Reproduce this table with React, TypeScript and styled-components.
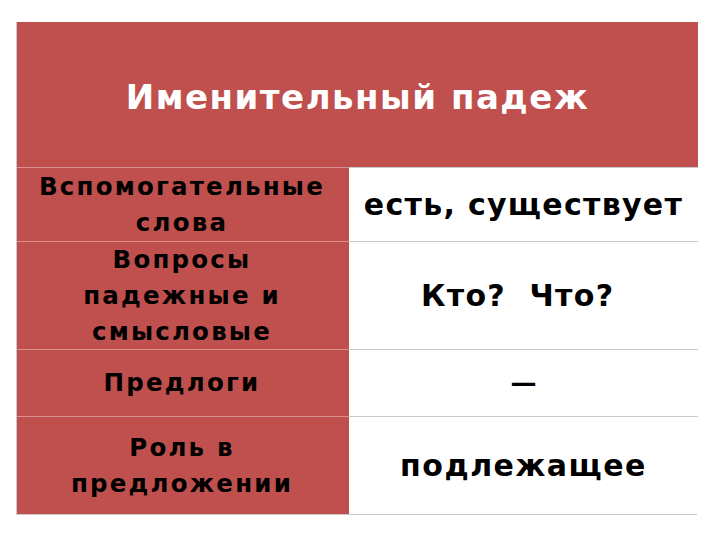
import React from "react";
import styled, { createGlobalStyle } from "styled-components";

const Global = createGlobalStyle`
  html, body { margin: 0; padding: 0; background: #ffffff; }
  body { font-family: "DejaVu Sans", "Liberation Sans", sans-serif; }
`;

const Page = styled.div`
  width: 720px;
  height: 540px;
  padding: 22px 23px 0 16px;
  box-sizing: border-box;
`;

const Table = styled.div`
  display: grid;
  grid-template-columns: 332px 349px;
  grid-template-rows: 145px 74px 108px 67px 98px;
  width: 681px;
  border-left: 1px solid #c9c9c9;
  border-right: 1px solid #c9c9c9;
  border-bottom: 1px solid #c9c9c9;
  box-sizing: border-box;
`;

const Header = styled.div`
  grid-column: 1 / 3;
  background: #c0504d;
  color: #ffffff;
  display: flex;
  align-items: center;
  justify-content: center;
  font-weight: bold;
  font-size: 34px;
  letter-spacing: 1.5px;
  padding-top: 4px;
  box-sizing: border-box;
`;

const Label = styled.div`
  background: #c0504d;
  color: #000000;
  border-top: 1px solid #d98f8d;
  display: flex;
  align-items: center;
  justify-content: center;
  text-align: center;
  font-weight: bold;
  font-size: 24.5px;
  line-height: 36px;
  letter-spacing: 2.2px;
  box-sizing: border-box;
  padding: 0 2px 0 0;
`;

const Value = styled.div<{ $size?: number; $spacing?: number }>`
  background: #ffffff;
  color: #000000;
  border-top: 1px solid #c9c9c9;
  display: flex;
  align-items: center;
  justify-content: center;
  text-align: center;
  font-weight: bold;
  font-size: ${(p) => p.$size ?? 30}px;
  letter-spacing: ${(p) => p.$spacing ?? 1.3}px;
  white-space: pre;
  box-sizing: border-box;
`;

export default function App() {
  return (
    <>
      <Global />
      <Page>
        <Table>
          <Header>Именительный падеж</Header>
          <Label>
            Вспомогательные
            <br />
            слова
          </Label>
          <Value>есть, существует</Value>
          <Label>
            Вопросы
            <br />
            падежные и
            <br />
            смысловые
          </Label>
          <Value>{"Кто?  Что? "}</Value>
          <Label>Предлоги</Label>
          <Value $size={26} $spacing={0}>—</Value>
          <Label>
            Роль в
            <br />
            предложении
          </Label>
          <Value $spacing={1.5}>подлежащее</Value>
        </Table>
      </Page>
    </>
  );
}
